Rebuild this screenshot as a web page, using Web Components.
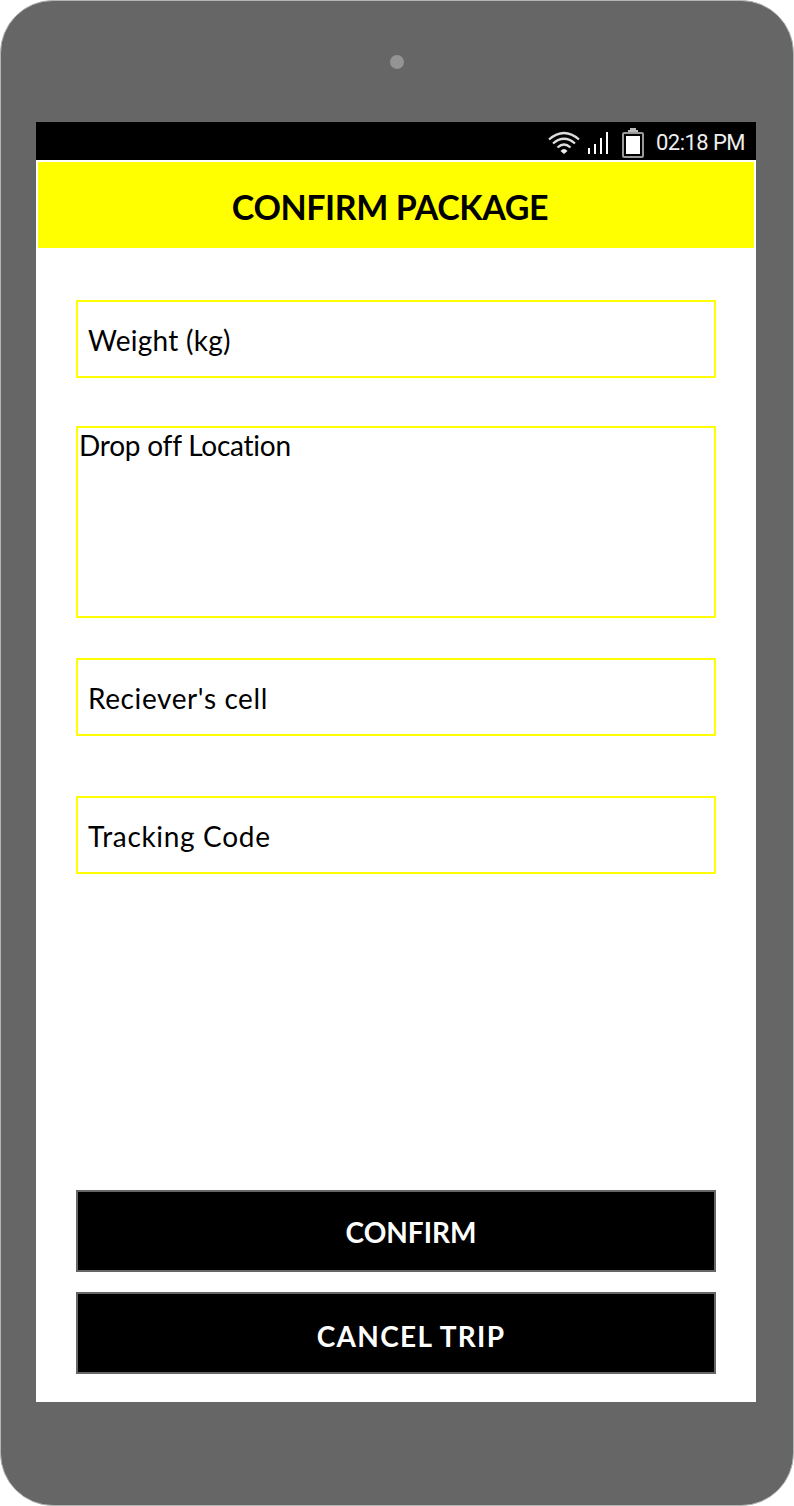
<!DOCTYPE html>
<html lang="en">
<head>
<meta charset="utf-8">
<title>Confirm package</title>
<style>
html,body{margin:0;background:#fff}
body{font-family:Lato,"Noto Sans",sans-serif;color:#000;width:794px;height:1506px;overflow:hidden}
</style>
</head>
<body>
<phone-frame>
  <status-bar slot="status">02:18 PM</status-bar>
  <title-bar style="--track:-.4px">CONFIRM PACKAGE</title-bar>
  <package-form>
    <form-field style="--h:78px;--gap:48px;--track:.27px">Weight (kg)</form-field>
    <form-field multiline style="--h:192px;--gap:40px;--track:-.23px">Drop off Location</form-field>
    <form-field style="--h:78px;--gap:60px;--track:.6px">Reciever's cell</form-field>
    <form-field style="--h:78px;--gap:0px;--track:.68px">Tracking Code</form-field>
    <action-button slot="actions" style="--shift:30px">CONFIRM</action-button>
    <action-button slot="actions" style="--shift:30px;--track:1.3px;--drop:6px">CANCEL TRIP</action-button>
  </package-form>
</phone-frame>
<script>
const define = (name, html) => {
  const t = document.createElement('template');
  t.innerHTML = html;
  customElements.define(name, class extends HTMLElement {
    constructor() {
      super();
      this.attachShadow({mode: 'open'}).append(t.content.cloneNode(true));
    }
  });
};

define('phone-frame', `
<style>
:host{display:block;width:794px;height:1506px}
.body{box-sizing:border-box;width:794px;height:1506px;border:1px solid #b3b5b5;border-radius:53px;background:#666;display:flex;flex-direction:column;align-items:flex-start;padding-left:35px}
.camera{width:14px;height:14px;border-radius:50%;background:#949494;margin:53.5px 0 52.5px 354px;flex:none}
.screen{width:720px;height:1280px;margin-top:1px;background:#fff;display:flex;flex-direction:column;flex:none}
</style>
<div class="body"><div class="camera"></div><div class="screen"><slot name="status"></slot><slot></slot></div></div>`);

define('status-bar', `
<style>
:host{display:flex;box-sizing:border-box;height:38px;background:#000;color:#eee;justify-content:flex-end;align-items:center;padding-right:11px;font:22px/38px Roboto,sans-serif;letter-spacing:-.55px;flex:none}
svg{flex:none}
span{width:89px;white-space:nowrap;padding-top:3px}
</style>
<svg width="108" height="38" viewBox="548 122 108 38" fill="none">
  <g stroke="#ddd" stroke-width="2.3">
    <path d="M549 139.5Q564 126.5 579 139.5"/>
    <path d="M553 143.5Q564 134 575 143.5"/>
    <path d="M557.5 147.5Q564 141.5 570.5 147.5"/>
  </g>
  <path d="M560.5 151Q564 147 567.500 151L564 154Z" fill="#eee"/>
  <path d="M588 148h2v6h-2zM594 144h2v10h-2zM600 138h2v16h-2zM606 132h2v22h-2z" fill="#fff"/>
  <path d="M630 128h6v2h2v2h-10v-2h2z" fill="#bbb"/>
  <rect x="623" y="133" width="20" height="24" rx="1" stroke="#999" stroke-width="2"/>
  <rect x="626" y="136" width="14" height="18" fill="#fff"/>
</svg>
<span><slot></slot></span>`);

define('title-bar', `
<style>
:host{display:flex;justify-content:center;align-items:center;box-sizing:border-box;height:86px;margin:2px 2px 0;padding:2px 12px 0 0;background:#ff0;font-size:34px;font-weight:700;letter-spacing:var(--track,0);white-space:nowrap;flex:none}
</style><slot></slot>`);

define('package-form', `
<style>
:host{display:flex;flex-direction:column;flex:1;box-sizing:border-box;padding:52px 40px 28px}
.fields{display:flex;flex-direction:column}
.actions{display:flex;flex-direction:column;gap:20px;margin-top:auto}
</style>
<div class="fields"><slot></slot></div><div class="actions"><slot name="actions"></slot></div>`);

define('form-field', `
<style>
:host{display:flex;align-items:center;box-sizing:border-box;height:var(--h);margin-bottom:var(--gap);border:2px solid #ff0;padding:2px 0 0 10px;font-size:28px;line-height:36px;letter-spacing:var(--track);white-space:nowrap}
:host([multiline]){align-items:flex-start;padding:0 0 0 1px;line-height:34px}
</style><slot></slot>`);

define('action-button', `
<style>
:host{display:flex;align-items:center;justify-content:center;box-sizing:border-box;height:82px;border:2px solid #666;background:#000;color:#fff;padding:var(--drop,2px) 0 0 var(--shift);font-size:28px;font-weight:700;letter-spacing:var(--track,0);white-space:nowrap}
</style><slot></slot>`);
</script>
</body>
</html>
